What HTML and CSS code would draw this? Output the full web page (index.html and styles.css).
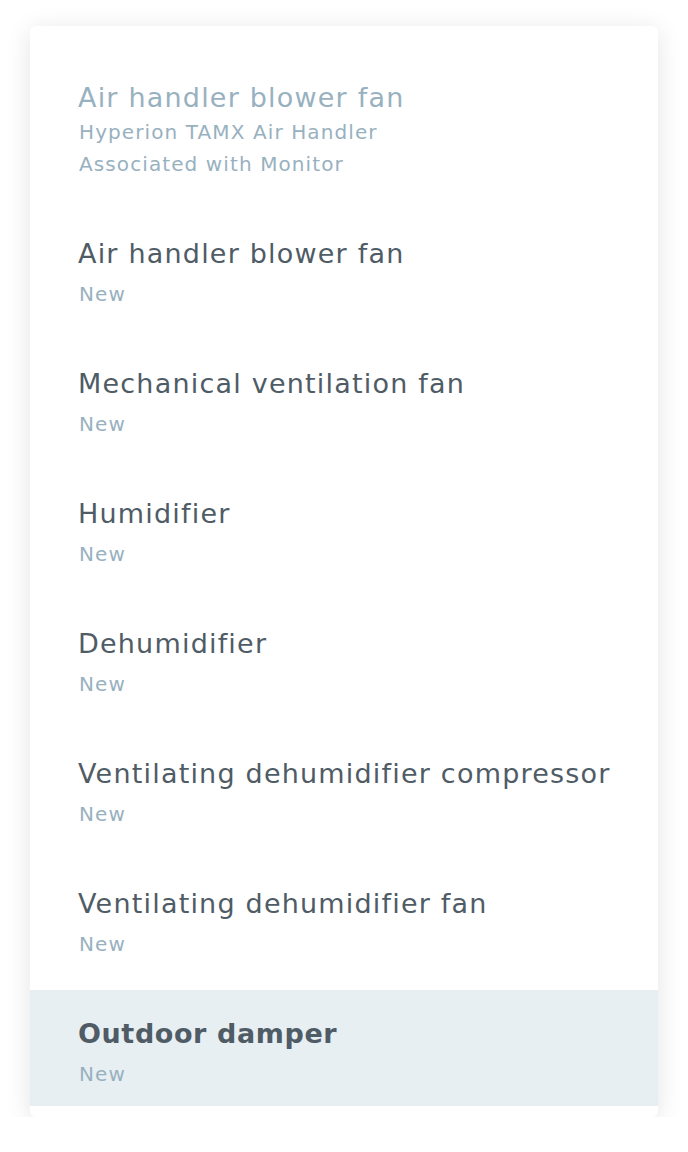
FILE: index.html
```html
<!DOCTYPE html>
<html lang="en">
<head>
    <meta charset="UTF-8">
    <meta name="viewport" content="width=device-width, initial-scale=1.0">
    <title>Equipment</title>
    <link rel="stylesheet" href="styles.css">
</head>
<body>
    <div class="card">
        <div class="item disabled">
            <div class="title">Air handler blower fan</div>
            <div class="sub">Hyperion TAMX Air Handler</div>
            <div class="sub second">Associated with Monitor</div>
        </div>
        <div class="item">
            <div class="title">Air handler blower fan</div>
            <div class="sub">New</div>
        </div>
        <div class="item">
            <div class="title">Mechanical ventilation fan</div>
            <div class="sub">New</div>
        </div>
        <div class="item">
            <div class="title">Humidifier</div>
            <div class="sub">New</div>
        </div>
        <div class="item">
            <div class="title">Dehumidifier</div>
            <div class="sub">New</div>
        </div>
        <div class="item">
            <div class="title">Ventilating dehumidifier compressor</div>
            <div class="sub">New</div>
        </div>
        <div class="item">
            <div class="title">Ventilating dehumidifier fan</div>
            <div class="sub">New</div>
        </div>
        <div class="item active">
            <div class="title">Outdoor damper</div>
            <div class="sub">New</div>
        </div>
    </div>
</body>
</html>
```

FILE: styles.css
```css
body{
    margin: 0;
    background: #fff;
    font-family: "DejaVu Sans", "Open Sans", sans-serif;
}
.card{
    width: 628px;
    margin: 26px 0 0 30px;
    padding: 28px 0 11px;
    background: #fff;
    border-radius: 6px;
    box-shadow: 0 4px 26px rgba(0, 0, 0, 0.11);
}
.item{
    padding: 28px 24px 16px 48px;
    margin-bottom: 14px;
    white-space: nowrap;
}
.item:last-child{
    margin-bottom: 0;
}
.title{
    font-size: 27px;
    line-height: 32px;
    letter-spacing: 1.2px;
    color: #4f5c66;
}
.sub{
    margin-top: 8px;
    padding-left: 1px;
    font-size: 20px;
    line-height: 32px;
    letter-spacing: 1.1px;
    color: #98b1bf;
}
.disabled .title{
    color: #98b1bf;
}
.disabled .sub{
    margin-top: 2px;
}
.disabled .sub.second{
    margin-top: 0;
}
.active{
    background: #e8eff3;
}
.active .title{
    font-weight: 700;
    letter-spacing: 0.6px;
}
```
